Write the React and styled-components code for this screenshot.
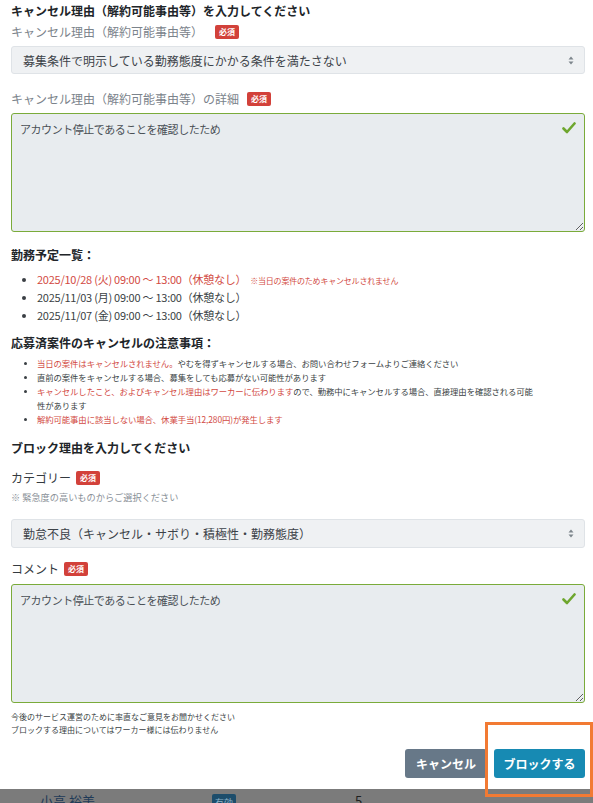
import React from "react";
import styled, { createGlobalStyle } from "styled-components";

const Global = createGlobalStyle`
  html, body { margin: 0; padding: 0; background: #fff; }
  body {
    font-family: "Noto Sans CJK JP", "Noto Sans", sans-serif;
    color: #212529;
    width: 593px;
    height: 803px;
    overflow: hidden;
  }
  * { box-sizing: border-box; }
`;

const Page = styled.div`
  position: relative;
  width: 593px;
  height: 803px;
  display: flex;
  flex-direction: column;
`;

const Modal = styled.div`
  background: #fff;
  padding: 2px 8px 12px 11px;
  height: 789px;
  flex: none;
  border-radius: 0 0 4px 4px;
`;

const SectionTitle = styled.div`
  font-size: 12px;
  font-weight: 700;
  line-height: 18px;
  color: #212529;
  margin-top: ${(p) => p.$mt || 0}px;
`;

const FieldLabel = styled.div`
  display: flex;
  align-items: center;
  gap: ${(p) => p.$gap || 6}px;
  font-size: 12px;
  line-height: 18px;
  height: 18px;
  color: ${(p) => (p.$dark ? "#343a40" : "#7b838b")};
  margin-top: ${(p) => p.$mt || 0}px;
`;

const Badge = styled.span`
  display: inline-flex;
  align-items: center;
  justify-content: center;
  background: #d2413a;
  color: #fff;
  font-size: 8px;
  font-weight: 700;
  height: 14px;
  padding: 0 4px;
  border-radius: 2px;
  line-height: 1;
`;

const SelectBox = styled.div`
  display: flex;
  align-items: center;
  justify-content: space-between;
  height: ${(p) => p.$h || 28}px;
  margin-top: ${(p) => p.$mt || 0}px;
  padding: 0 10px 0 11px;
  background: #eff1f3;
  border: 1px solid #dfe3e7;
  border-radius: 3px;
  font-size: 12px;
  color: #3c4248;
`;

const Arrow = () => (
  <svg width="6" height="9" viewBox="0 0 6 9">
    <path d="M3 0.5 L5.5 3.5 H0.5 Z" fill="#7d858c" />
    <path d="M3 8.5 L5.5 5.5 H0.5 Z" fill="#7d858c" />
  </svg>
);

const AreaWrap = styled.div`
  position: relative;
  margin-top: ${(p) => p.$mt || 0}px;
`;

const TextArea = styled.textarea`
  display: block;
  width: 100%;
  height: ${(p) => p.$h || 119}px;
  padding: 6px 30px 6px 8px;
  background: #e8ecef;
  border: 1.5px solid #7aab3a;
  border-radius: 3px;
  font-family: "Noto Sans CJK JP", "Noto Sans", sans-serif;
  font-size: 11px;
  letter-spacing: -0.45px;
  line-height: 18px;
  color: #4a5056;
  resize: vertical;
  outline: none;
`;

const Check = styled.svg`
  position: absolute;
  top: 9px;
  right: 9px;
`;

const CheckIcon = () => (
  <Check width="14" height="12" viewBox="0 0 14 12">
    <path d="M1.5 6.5 L5 10 L12.5 1.5" fill="none" stroke="#6ea62e" strokeWidth="2.6" strokeLinecap="round" strokeLinejoin="round" />
  </Check>
);

const ScheduleList = styled.ul`
  margin: 6px 0 0;
  padding-left: 26px;
  font-size: 11px;
  letter-spacing: -0.25px;
  line-height: 18px;
  color: #3a3f44;
`;

const Item = styled.li`
  height: 18px;
  white-space: nowrap;
  color: ${(p) => (p.$red ? "#d24a43" : "inherit")};
  &::marker { color: #3a3f44; }
`;

const Note = styled.span`
  font-size: 8px;
  letter-spacing: -0.2px;
  color: #d24a43;
  margin-left: 4px;
`;

const CautionList = styled.ul`
  margin: 4px 0 0;
  padding-left: 26px;
  padding-right: 50px;
  font-size: 8.4px;
  letter-spacing: -0.1px;
  line-height: 14px;
  color: #3a3f44;
  & li::marker { font-size: 8px; }
`;

const Red = styled.span`
  color: #d24a43;
`;

const Hint = styled.div`
  font-size: 9.2px;
  line-height: 14px;
  color: #8a9198;
  margin-top: ${(p) => p.$mt || 0}px;
`;

const SmallNote = styled.div`
  font-size: 8px;
  line-height: 13px;
  color: #3a3f44;
  margin-top: ${(p) => p.$mt || 0}px;
`;

const Footer = styled.div`
  display: flex;
  justify-content: flex-end;
  gap: 7px;
  margin-top: 13px;
`;

const Button = styled.button`
  height: 29px;
  padding: 0 ${(p) => p.$px || 11}px;
  border: none;
  border-radius: 3px;
  background: ${(p) => (p.$primary ? "#178ab3" : "#677888")};
  color: #fff;
  font-family: "Noto Sans CJK JP", "Noto Sans", sans-serif;
  font-size: 12px;
  font-weight: 700;
`;

const Highlight = styled.div`
  position: absolute;
  left: 485px;
  top: 722px;
  width: 108px;
  height: 75px;
  border: 3.5px solid #f27a33;
  pointer-events: none;
`;

const Backdrop = styled.div`
  flex: 1;
  background: #7b7b7b;
  overflow: hidden;
  display: flex;
  align-items: flex-start;
  font-size: 13px;
  padding-top: 4px;
  line-height: 16px;
`;

const BgName = styled.span`
  width: 212px;
  padding-left: 40px;
  color: #1f3a57;
`;

const BgBadge = styled.span`
  width: 143px;
  & > span {
    display: inline-block;
    background: #1d4d6b;
    color: #8fb3c8;
    font-size: 9px;
    padding: 1px 3px;
    border-radius: 2px;
  }
`;

const BgNum = styled.span`
  color: #1e1e1e;
`;

export default function App() {
  return (
    <Page>
      <Global />
      <Modal>
        <SectionTitle>キャンセル理由（解約可能事由等）を入力してください</SectionTitle>
        <FieldLabel $mt={3} $gap={12}>
          キャンセル理由（解約可能事由等）<Badge>必須</Badge>
        </FieldLabel>
        <SelectBox $mt={5}>
          <span>募集条件で明示している勤務態度にかかる条件を満たさない</span>
          <Arrow />
        </SelectBox>
        <FieldLabel $mt={16} $gap={8}>
          キャンセル理由（解約可能事由等）の詳細<Badge>必須</Badge>
        </FieldLabel>
        <AreaWrap $mt={5}>
          <TextArea readOnly defaultValue="アカウント停止であることを確認したため" />
          <CheckIcon />
        </AreaWrap>

        <SectionTitle $mt={14}>勤務予定一覧：</SectionTitle>
        <ScheduleList>
          <Item $red>
            2025/10/28 (火) 09:00 〜 13:00（休憩なし）<Note>※当日の案件のためキャンセルされません</Note>
          </Item>
          <Item>2025/11/03 (月) 09:00 〜 13:00（休憩なし）</Item>
          <Item>2025/11/07 (金) 09:00 〜 13:00（休憩なし）</Item>
        </ScheduleList>

        <SectionTitle $mt={10}>応募済案件のキャンセルの注意事項：</SectionTitle>
        <CautionList>
          <li>
            <Red>当日の案件はキャンセルされません。</Red>やむを得ずキャンセルする場合、お問い合わせフォームよりご連絡ください
          </li>
          <li>直前の案件をキャンセルする場合、募集をしても応募がない可能性があります</li>
          <li>
            <Red>キャンセルしたこと、およびキャンセル理由はワーカーに伝わります</Red>ので、勤務中にキャンセルする場合、直接理由を確認される可能性があります
          </li>
          <li>
            <Red>解約可能事由に該当しない場合、休業手当(12,280円)が発生します</Red>
          </li>
        </CautionList>

        <SectionTitle $mt={13}>ブロック理由を入力してください</SectionTitle>
        <FieldLabel $dark $mt={12} $gap={5}>
          カテゴリー<Badge>必須</Badge>
        </FieldLabel>
        <Hint $mt={3}>※ 緊急度の高いものからご選択ください</Hint>
        <SelectBox $mt={15} $h={29}>
          <span>勤怠不良（キャンセル・サボり・積極性・勤務態度）</span>
          <Arrow />
        </SelectBox>
        <FieldLabel $dark $mt={12} $gap={5}>
          コメント<Badge>必須</Badge>
        </FieldLabel>
        <AreaWrap $mt={6}>
          <TextArea readOnly defaultValue="アカウント停止であることを確認したため" />
          <CheckIcon />
        </AreaWrap>
        <SmallNote $mt={7}>今後のサービス運営のために率直なご意見をお聞かせください</SmallNote>
        <SmallNote>ブロックする理由についてはワーカー様には伝わりません</SmallNote>
        <Footer>
          <Button>キャンセル</Button>
          <Button $primary $px={9.5}>ブロックする</Button>
        </Footer>
      </Modal>
      <Backdrop>
        <BgName>小高 裕美</BgName>
        <BgBadge>
          <span>有効</span>
        </BgBadge>
        <BgNum>5</BgNum>
      </Backdrop>
      <Highlight />
    </Page>
  );
}
